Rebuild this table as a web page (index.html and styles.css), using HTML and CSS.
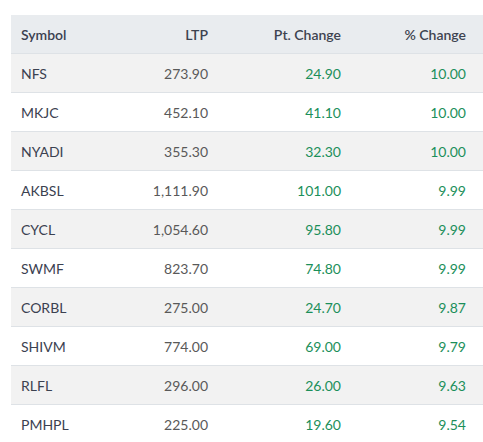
FILE: index.html
```html
<!DOCTYPE html>
<html>
<head>
<meta charset="utf-8">
<link rel="stylesheet" href="styles.css">
</head>
<body>
<div class="wrap">
<table class="stocks">
<colgroup><col class="c1"><col class="c2"><col class="c3"><col class="c4"></colgroup>
<thead>
<tr><th class="sym">Symbol</th><th>LTP</th><th>Pt. Change</th><th class="last">% Change</th></tr>
</thead>
<tbody>
<tr><td class="sym">NFS</td><td>273.90</td><td class="up">24.90</td><td class="up last">10.00</td></tr>
<tr><td class="sym">MKJC</td><td>452.10</td><td class="up">41.10</td><td class="up last">10.00</td></tr>
<tr><td class="sym">NYADI</td><td>355.30</td><td class="up">32.30</td><td class="up last">10.00</td></tr>
<tr><td class="sym">AKBSL</td><td>1,111.90</td><td class="up">101.00</td><td class="up last">9.99</td></tr>
<tr><td class="sym">CYCL</td><td>1,054.60</td><td class="up">95.80</td><td class="up last">9.99</td></tr>
<tr><td class="sym">SWMF</td><td>823.70</td><td class="up">74.80</td><td class="up last">9.99</td></tr>
<tr><td class="sym">CORBL</td><td>275.00</td><td class="up">24.70</td><td class="up last">9.87</td></tr>
<tr><td class="sym">SHIVM</td><td>774.00</td><td class="up">69.00</td><td class="up last">9.79</td></tr>
<tr><td class="sym">RLFL</td><td>296.00</td><td class="up">26.00</td><td class="up last">9.63</td></tr>
<tr><td class="sym">PMHPL</td><td>225.00</td><td class="up">19.60</td><td class="up last">9.54</td></tr>
</tbody>
</table>
</div>
</body>
</html>
```
FILE: styles.css
```css
html, body { margin: 0; padding: 0; background: #fff; }
body { font-family: "Lato", "Open Sans", sans-serif; font-size: 14px; color: #555; }
.wrap { padding: 15px 0 0 11px; overflow: hidden; }
.stocks { width: 472px; border-collapse: collapse; table-layout: fixed; }
.c1 { width: 109px; }
.c2 { width: 98px; }
.c3 { width: 133px; }
.c4 { width: 132px; }
.stocks th, .stocks td { height: 38px; padding: 0 10px; text-align: right; border-bottom: 1px solid #dee2e6; white-space: nowrap; }
.stocks th { background: #e9ecef; color: #3d4350; font-weight: 600; }
.stocks td { color: #595959; }
.stocks .sym { text-align: left; color: #3b4150; }
.stocks th.last, .stocks td.last { padding-right: 17px; }
.stocks tbody tr:nth-child(odd) { background: #f2f2f2; }
.stocks td.up { color: #1b8f5a; }
```
